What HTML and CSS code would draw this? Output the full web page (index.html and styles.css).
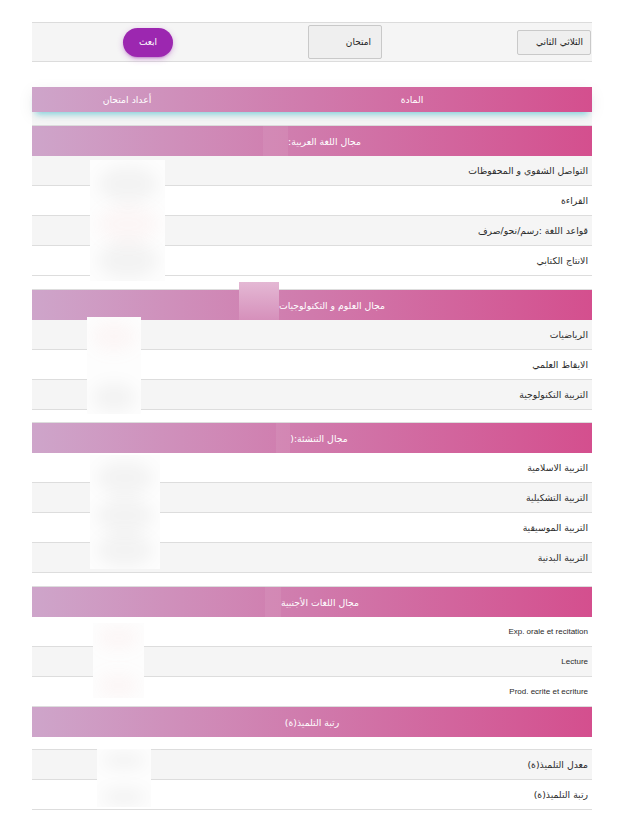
FILE: index.html
```html
<!DOCTYPE html>
<html lang="ar" dir="rtl">
<head>
<meta charset="utf-8">
<title>النتائج</title>
<link rel="stylesheet" href="styles.css">
</head>
<body>
<div class="page">
  <div class="toolbar">
    <div class="select sel-term">الثلاثي الثاني</div>
    <div class="select sel-exam">امتحان</div>
    <button class="btn-send">ابعث</button>
  </div>

  <div class="card-header">
    <div class="ch-subject">المادة</div>
    <div class="ch-marks">أعداد امتحان</div>
  </div>

  <div class="table">
    <div class="spacer spacer-first"></div>
    <div class="group-head"><span class="gh-text">مجال اللغة العربية:</span><span class="patch patch-1"></span></div>
    <div class="rows">
      <div class="row grey"><div class="subj">التواصل الشفوي و المحفوظات</div><div class="score"></div></div>
      <div class="row"><div class="subj">القراءة</div><div class="score"></div></div>
      <div class="row grey"><div class="subj">قواعد اللغة :رسم/نحو/صرف</div><div class="score"></div></div>
      <div class="row"><div class="subj">الانتاج الكتابي</div><div class="score"></div></div>
      <div class="blur blur-1"><span class="smudge sm-a"></span><span class="smudge sm-pink sm-b"></span><span class="smudge sm-c"></span></div>
    </div>

    <div class="spacer"></div>
    <div class="group-head"><span class="gh-text">مجال العلوم و التكنولوجيات</span><span class="patch patch-2"></span></div>
    <div class="rows">
      <div class="row grey"><div class="subj">الرياضيات</div><div class="score"></div></div>
      <div class="row"><div class="subj">الايقاظ العلمي</div><div class="score"></div></div>
      <div class="row grey"><div class="subj">التربية التكنولوجية</div><div class="score"></div></div>
      <div class="blur blur-2"><span class="smudge sm-pink sm-a"></span><span class="smudge sm-c"></span></div>
    </div>

    <div class="spacer spacer-short"></div>
    <div class="group-head"><span class="gh-text">مجال التنشئة:(</span><span class="patch patch-3"></span></div>
    <div class="rows">
      <div class="row"><div class="subj">التربية الاسلامية</div><div class="score"></div></div>
      <div class="row grey"><div class="subj">التربية التشكيلية</div><div class="score"></div></div>
      <div class="row"><div class="subj">التربية الموسيقية</div><div class="score"></div></div>
      <div class="row grey"><div class="subj">التربية البدنية</div><div class="score"></div></div>
      <div class="blur blur-3"><span class="smudge sm-a"></span><span class="smudge sm-b"></span><span class="smudge sm-c"></span></div>
    </div>

    <div class="spacer"></div>
    <div class="group-head"><span class="gh-text">مجال اللغات الأجنبية</span><span class="patch patch-4"></span></div>
    <div class="rows">
      <div class="row"><div class="subj latin">Exp. orale et recitation</div><div class="score"></div></div>
      <div class="row grey"><div class="subj latin">Lecture</div><div class="score"></div></div>
      <div class="row"><div class="subj latin">Prod. ecrite et ecriture</div><div class="score"></div></div>
      <div class="blur blur-4"><span class="smudge sm-pink sm-a"></span><span class="smudge sm-pink sm-c"></span></div>
    </div>

    <div class="group-head"><span class="gh-text">رتبة التلميذ(ة)</span></div>
    <div class="spacer spacer-short"></div>
    <div class="rows">
      <div class="row grey"><div class="subj">معدل التلميذ(ة)</div><div class="score"></div></div>
      <div class="row"><div class="subj">رتبة التلميذ(ة)</div><div class="score"></div></div>
      <div class="blur blur-5"><span class="smudge sm-a"></span><span class="smudge sm-c"></span></div>
    </div>
  </div>
</div>
</body>
</html>
```

FILE: styles.css
```css
* { box-sizing: border-box; }

html, body {
  margin: 0;
  padding: 0;
  background: #ffffff;
}

body {
  font-family: "DejaVu Sans", "Liberation Sans", sans-serif;
  font-size: 9.3px;
  color: #2a2a2a;
}

.page {
  width: 560px;
  margin-top: 22px;
  margin-left: 32px;
  margin-right: auto;
}

/* top toolbar */
.toolbar {
  height: 40px;
  border-top: 1px solid #dcdcdc;
  border-bottom: 1px solid #dcdcdc;
  background: #f5f5f5;
  display: flex;
  align-items: center;
  gap: 135px;
  padding-right: 1px;
}

.select {
  background: #efefef;
  border: 1px solid #c9c9c9;
  border-radius: 2px;
  color: #222;
  display: flex;
  align-items: center;
  font-size: 9px;
}

.sel-term {
  width: 74px;
  height: 25px;
  padding-right: 7px;
}

.sel-exam {
  width: 74px;
  height: 34px;
  padding-right: 10px;
}

.btn-send {
  width: 50px;
  height: 29px;
  border: 0;
  border-radius: 15px;
  background: #9c27b0;
  color: #fff;
  font-family: "DejaVu Sans", sans-serif;
  font-size: 9px;
  font-weight: normal;
  padding: 0;
  box-shadow: 0 2px 2px 0 rgba(156,39,176,.14), 0 3px 1px -2px rgba(156,39,176,.2), 0 2px 6px 0 rgba(156,39,176,.3);
}

/* card header */
.card-header {
  margin-top: 25px;
  height: 25px;
  display: grid;
  grid-template-columns: 1fr 190px;
  align-items: center;
  color: #fff;
  background: linear-gradient(to left, #d44f8e, #d07aac 50%, #cea5ca);
  box-shadow: 0 4px 16px 0 rgba(0,0,0,.07), 0 6px 6px -4px rgba(0,188,212,.45);
  position: relative;
  z-index: 1;
}

.ch-subject {
  text-align: center;
  padding-left: 10px;
}

.ch-marks {
  text-align: center;
}

/* table */
.spacer {
  height: 14px;
  border-bottom: 1px solid #dddddd;
}

.spacer-short {
  height: 13px;
}

.spacer-first {
  background: #f6f7f7;
}

.group-head {
  height: 30px;
  display: flex;
  justify-content: center;
  align-items: stretch;
  color: #fff;
  background: linear-gradient(to left, #d44f8e, #d07aac 50%, #cea5ca);
}

.gh-text {
  display: flex;
  align-items: center;
}

.patch {
  display: block;
  background: rgba(255,255,255,.07);
}

.patch-1 { width: 25px; }
.patch-2 {
  width: 40px;
  margin-top: -8px;
  background: linear-gradient(to bottom, #e4b8d4, #d690bb);
}
.patch-3 { width: 14px; }
.patch-4 { width: 16px; }

.rows {
  position: relative;
}

.row {
  height: 30px;
  border-bottom: 1px solid #dddddd;
  display: grid;
  grid-template-columns: 1fr 190px;
  align-items: center;
  background: #ffffff;
}

.row.grey {
  background: #f5f5f5;
}

.subj {
  padding-right: 4px;
  text-align: right;
}

.subj.latin {
  font-family: "Liberation Sans", sans-serif;
  font-size: 8px;
}

/* blurred marks column */
.blur {
  position: absolute;
  background: #fdfdfd;
  overflow: hidden;
}

.smudge {
  position: absolute;
  left: 10%;
  width: 80%;
  height: 30%;
  background: rgba(0,0,0,.04);
  filter: blur(8px);
  border-radius: 50%;
}

.smudge.sm-pink { background: rgba(240,150,150,.07); }
.sm-a { top: 5%; }
.sm-b { top: 38%; }
.sm-c { top: 68%; }

.blur-1 { left: 58px; width: 75px; top: 4px; height: 121px; }
.blur-2 { left: 55px; width: 54px; top: -3px; height: 97px; }
.blur-3 { left: 58px; width: 70px; top: 2px; height: 114px; }
.blur-4 { left: 61px; width: 51px; top: 6px; height: 75px; }
.blur-5 { left: 65px; width: 54px; top: -1px; height: 58px; }
```
